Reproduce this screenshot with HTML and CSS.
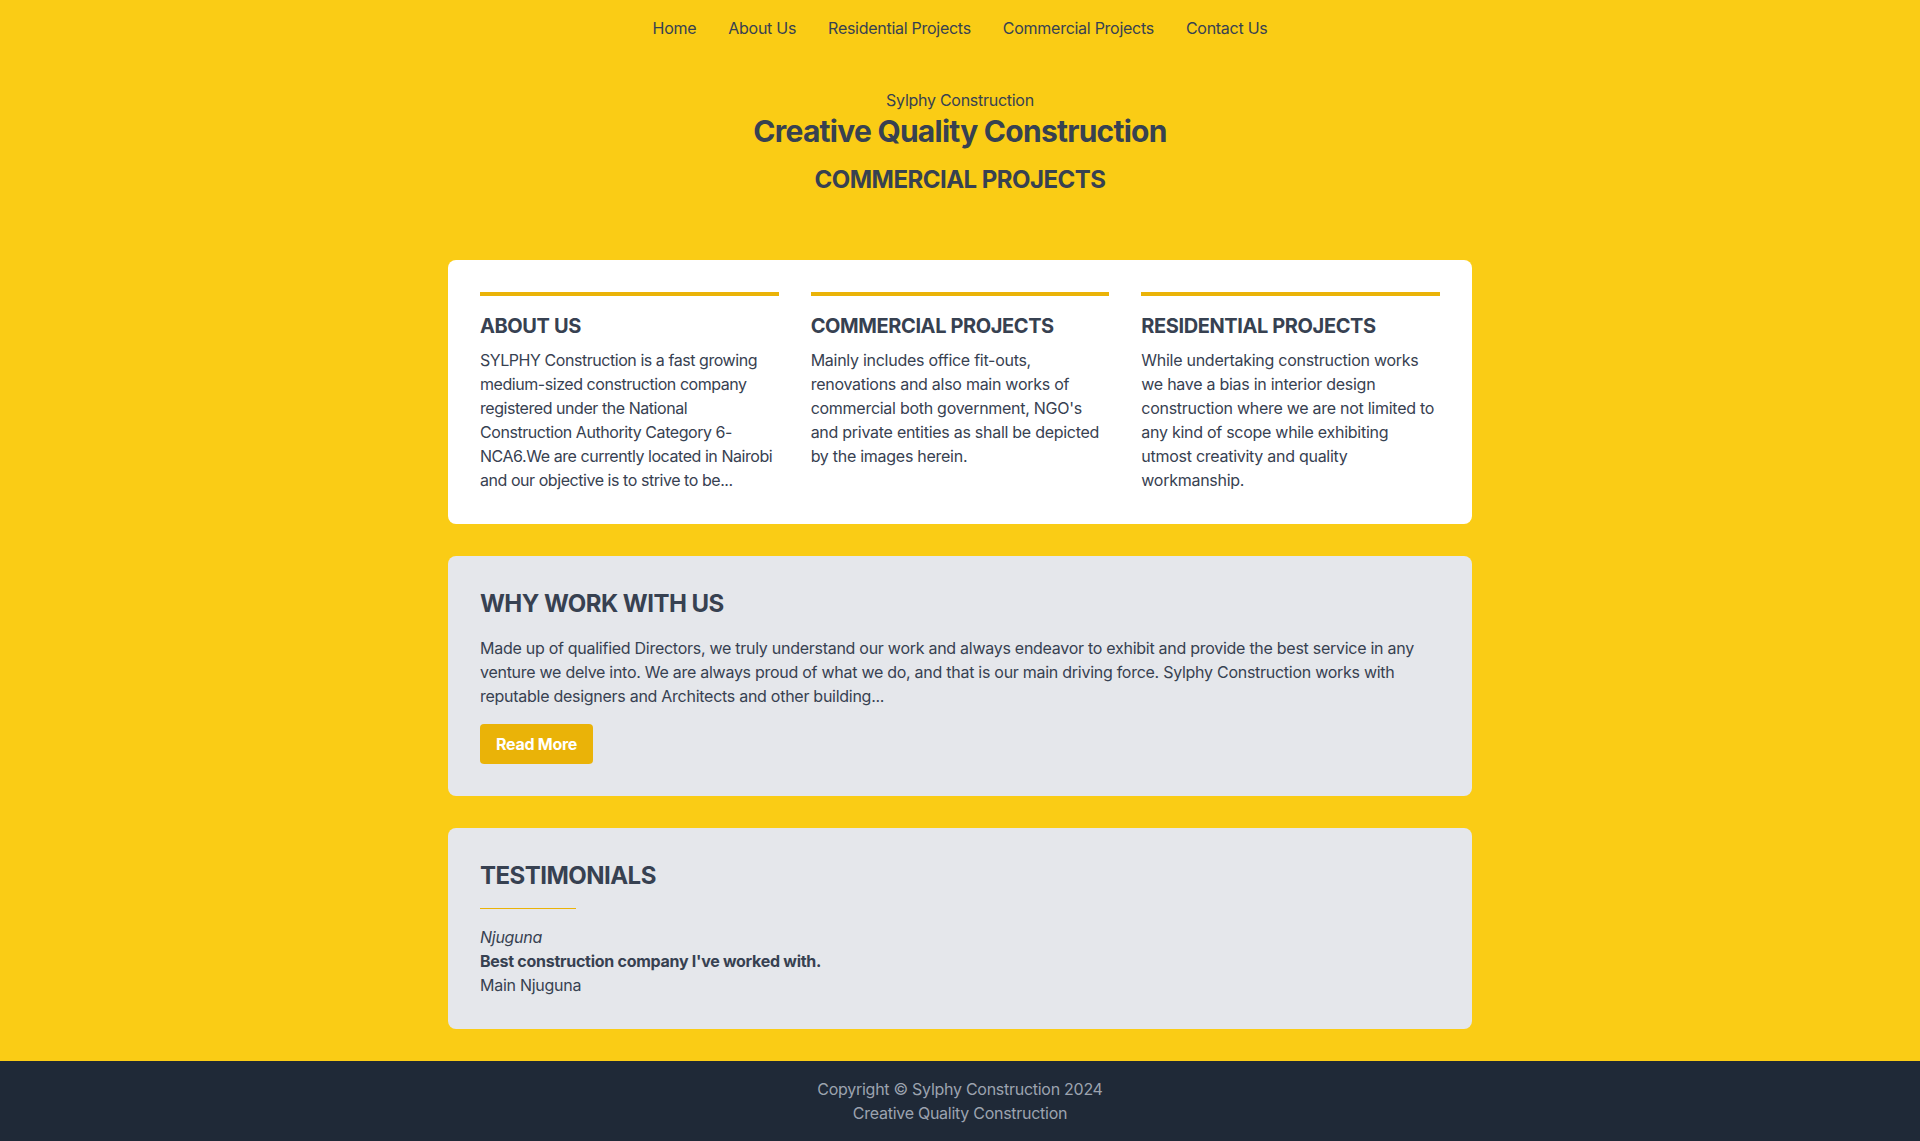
FILE: index.html
```html
<!DOCTYPE html>
<html lang="en">
<head>
<meta charset="utf-8">
<title>Commercial Projects - Sylphy Construction</title>
<link rel="stylesheet" href="styles.css">
</head>
<body>
<nav class="nav">
  <a href="#">Home</a>
  <a href="#">About Us</a>
  <a href="#">Residential Projects</a>
  <a href="#">Commercial Projects</a>
  <a href="#">Contact Us</a>
</nav>
<header class="header">
  <p class="brand">Sylphy Construction</p>
  <h1 class="title">Creative Quality Construction</h1>
  <h2 class="page-title">COMMERCIAL PROJECTS</h2>
</header>
<main class="main">
  <section class="card card-white">
    <div class="cols">
      <div class="col">
        <div class="bar"></div>
        <h3 class="col-title">ABOUT US</h3>
        <p class="text text-tight">SYLPHY Construction is a fast growing medium-sized construction company registered under the National Construction Authority Category 6-NCA6.We are currently located in Nairobi and our objective is to strive to be...</p>
      </div>
      <div class="col">
        <div class="bar"></div>
        <h3 class="col-title">COMMERCIAL PROJECTS</h3>
        <p class="text">Mainly includes office fit-outs, renovations and also main works of commercial both government, NGO's and private entities as shall be depicted by the images herein.</p>
      </div>
      <div class="col">
        <div class="bar"></div>
        <h3 class="col-title">RESIDENTIAL PROJECTS</h3>
        <p class="text">While undertaking construction works we have a bias in interior design construction where we are not limited to any kind of scope while exhibiting utmost creativity and quality workmanship.</p>
      </div>
    </div>
  </section>
  <section class="card card-gray">
    <h2 class="section-title">WHY WORK WITH US</h2>
    <p class="text">Made up of qualified Directors, we truly understand our work and always endeavor to exhibit and provide the best service in any venture we delve into. We are always proud of what we do, and that is our main driving force. Sylphy Construction works with reputable designers and Architects and other building...</p>
    <a href="#" class="btn">Read More</a>
  </section>
  <section class="card card-gray">
    <h2 class="section-title">TESTIMONIALS</h2>
    <div class="divider"></div>
    <p class="text italic">Njuguna</p>
    <p class="text bold">Best construction company I've worked with.</p>
    <p class="text">Main Njuguna</p>
  </section>
</main>
<footer class="footer">
  <p>Copyright © Sylphy Construction 2024</p>
  <p>Creative Quality Construction</p>
</footer>
</body>
</html>
```

FILE: styles.css
```css
* { box-sizing: border-box; }
html, body { margin: 0; padding: 0; }
body {
  background: #facc15;
  color: #374151;
  font-family: Inter, "Noto Sans", "Liberation Sans", sans-serif;
  font-size: 16px;
  line-height: 24px;
  letter-spacing: -0.017em;
}
p, h1, h2, h3 { margin: 0; }
a { color: inherit; text-decoration: none; }

.nav {
  display: flex;
  justify-content: center;
  gap: 32px;
  padding: 16px 0;
}
.nav a { color: #374151; }

.header {
  text-align: center;
  padding: 32px 0 64px;
}
.brand { font-size: 16px; line-height: 24px; }
.title { font-size: 30px; line-height: 36px; font-weight: 700; margin-top: 1px; letter-spacing: -0.025em; }
.page-title { font-size: 24px; line-height: 32px; font-weight: 700; margin-top: 15px; letter-spacing: -0.022em; }

.main {
  width: 1024px;
  margin: 0 auto;
  display: flex;
  flex-direction: column;
  gap: 32px;
  padding-bottom: 32px;
}
.card {
  border-radius: 8px;
  padding: 32px;
}
.card-white { background: #ffffff; }
.card-gray { background: #e5e7eb; }

.cols {
  display: grid;
  grid-template-columns: repeat(3, 1fr);
  gap: 32px;
}
.bar { height: 4px; background: #eab308; margin-bottom: 16px; }
.col-title { font-size: 20px; line-height: 28px; font-weight: 700; margin-bottom: 8px; letter-spacing: -0.02em; }

.section-title { font-size: 24px; line-height: 32px; font-weight: 700; margin-bottom: 16px; letter-spacing: -0.022em; }
.text { font-size: 16px; line-height: 24px; }
.text-tight { letter-spacing: -0.028em; }
.italic { font-style: italic; }
.bold { font-weight: 700; }

.btn {
  display: inline-block;
  margin-top: 16px;
  background: #eab308;
  color: #ffffff;
  font-weight: 700;
  padding: 8px 16px;
  border-radius: 4px;
}

.divider {
  width: 96px;
  height: 1px;
  background: #eab308;
  margin-bottom: 16px;
}

.footer {
  background: #1f2937;
  color: #9ca3af;
  text-align: center;
  padding: 16px 0;
}
```
